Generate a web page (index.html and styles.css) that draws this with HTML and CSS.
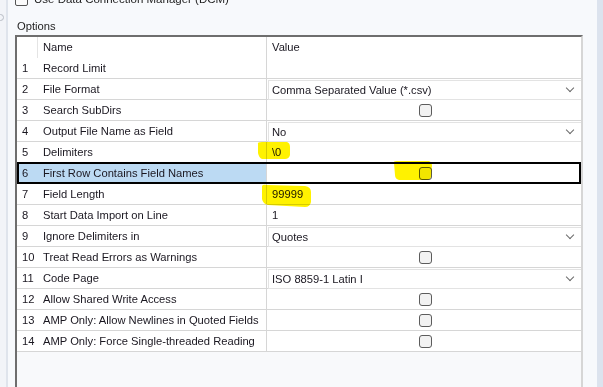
FILE: index.html
```html
<!DOCTYPE html>
<html>
<head>
    <meta charset="UTF-8">
    <title>Options</title>
    <link rel="stylesheet" href="styles.css">
</head>
<body>
    <div class="shell">
        <div class="rail"><span class="knob"></span></div>
        <div class="panel">
            <div class="dcm">
                <span class="tick"></span>
                <span>Use Data Connection Manager (DCM)</span>
            </div>
            <div class="caption">Options</div>

            <div class="grid">
                <div class="row head">
                    <div class="num"></div>
                    <div class="name">Name</div>
                    <div class="val">Value</div>
                </div>
                <div class="row">
                    <div class="num">1</div>
                    <div class="name">Record Limit</div>
                    <div class="val"></div>
                </div>
                <div class="row">
                    <div class="num">2</div>
                    <div class="name">File Format</div>
                    <div class="val"><div class="combo">Comma Separated Value (*.csv)<span class="chev"></span></div></div>
                </div>
                <div class="row">
                    <div class="num">3</div>
                    <div class="name">Search SubDirs</div>
                    <div class="val center"><span class="check"></span></div>
                </div>
                <div class="row">
                    <div class="num">4</div>
                    <div class="name">Output File Name as Field</div>
                    <div class="val"><div class="combo">No<span class="chev"></span></div></div>
                </div>
                <div class="row">
                    <div class="num">5</div>
                    <div class="name">Delimiters</div>
                    <div class="val text">\0</div>
                </div>
                <div class="row selected">
                    <div class="num">6</div>
                    <div class="name">First Row Contains Field Names</div>
                    <div class="val center"><span class="check"></span></div>
                </div>
                <div class="row">
                    <div class="num">7</div>
                    <div class="name">Field Length</div>
                    <div class="val text">99999</div>
                </div>
                <div class="row">
                    <div class="num">8</div>
                    <div class="name">Start Data Import on Line</div>
                    <div class="val text">1</div>
                </div>
                <div class="row">
                    <div class="num">9</div>
                    <div class="name">Ignore Delimiters in</div>
                    <div class="val"><div class="combo">Quotes<span class="chev"></span></div></div>
                </div>
                <div class="row">
                    <div class="num">10</div>
                    <div class="name">Treat Read Errors as Warnings</div>
                    <div class="val center"><span class="check"></span></div>
                </div>
                <div class="row">
                    <div class="num">11</div>
                    <div class="name">Code Page</div>
                    <div class="val"><div class="combo">ISO 8859-1 Latin I<span class="chev"></span></div></div>
                </div>
                <div class="row">
                    <div class="num">12</div>
                    <div class="name">Allow Shared Write Access</div>
                    <div class="val center"><span class="check"></span></div>
                </div>
                <div class="row">
                    <div class="num">13</div>
                    <div class="name">AMP Only: Allow Newlines in Quoted Fields</div>
                    <div class="val center"><span class="check"></span></div>
                </div>
                <div class="row">
                    <div class="num">14</div>
                    <div class="name">AMP Only: Force Single-threaded Reading</div>
                    <div class="val center"><span class="check"></span></div>
                </div>

                <!-- marker strokes drawn over the grid -->
                <svg class="marker" width="568" height="240" viewBox="0 0 568 240">
                    <path d="M241 107 Q240 105 245 105 L270 105 Q273 106 273 110 L273 118 Q272 122 268 122 L245 122 Q242 121 241 116 Z"/>
                    <path d="M377 126 Q376 124 380 124 L412 124 Q415 125 415 129 L414 140 Q413 143 409 143 L382 143 Q378 142 378 138 Z"/>
                    <path d="M245 149 Q246 147 250 148 L288 149 Q294 150 294 155 L294 165 Q293 170 288 170 L251 168 Q246 167 245 162 Z"/>
                </svg>
            </div>
        </div>
        <div class="edge"></div>
    </div>
</body>
</html>
```

FILE: styles.css
```css
html, body {
    margin: 0;
    height: 100%;
    overflow: hidden;
}

body {
    font-family: "Liberation Sans", Arial, sans-serif;
    font-size: 11.2px;
    color: #1a1720;
    background: #f7f9fc;
}

.shell {
    display: flex;
    height: 100%;
}

/* Left strip of the window */
.rail {
    width: 6px;
    background: #f2f4f8;
    border-right: 2px solid #dfe4ec;
    position: relative;
}

.knob {
    position: absolute;
    left: -3px;
    top: 14px;
    width: 5px;
    height: 5px;
    border: 1px solid #b8bcc4;
    border-radius: 50%;
}

.panel {
    flex: 1;
    padding-left: 7px;
    padding-right: 14px;
}

/* Right strip */
.edge {
    width: 6px;
    background: #dce3ee;
}

.dcm {
    display: flex;
    align-items: center;
    gap: 6px;
    height: 12px;
    margin-top: -7px;
    color: #1e1e1e;
    font-size: 11.5px;
}

.tick {
    width: 11px;
    height: 11px;
    border: 1px solid #555;
    border-radius: 2px;
    background: #fbfbfb;
}

.caption {
    margin-top: 13px;
    height: 17px;
    line-height: 17px;
    padding-left: 2px;
    color: #1e1e1e;
}

/* The property grid */
.grid {
    position: relative;
    width: 568px;
    height: 400px;
    border-top: 2px solid #6e6e6e;
    border-left: 2px solid #6e6e6e;
    border-right: 2px solid #d6d6d6;
    background: #f8f9fb;
    box-sizing: border-box;
}

.row {
    display: flex;
    height: 21px;
    box-sizing: border-box;
    background: #fff;
    border-bottom: 1px solid #d6d6d6;
    position: relative;
}

.row.head {
    border-bottom: none;
}

.num {
    width: 21px;
    padding-left: 5px;
    box-sizing: border-box;
    line-height: 20px;
}

.head .num {
    border-right: 1px solid #e4e4e4;
}

.name {
    width: 229px;
    padding-left: 5px;
    box-sizing: border-box;
    line-height: 20px;
    border-right: 1px solid #d6d6d6;
}

.val {
    flex: 1;
    line-height: 20px;
    padding-left: 1px;
}

.head .name,
.head .val {
    line-height: 21px;
}

.head .val {
    padding-left: 5px;
}

.val.text {
    padding-left: 5px;
}

.val.center {
    display: flex;
    justify-content: center;
    align-items: center;
}

.combo {
    position: relative;
    height: 18px;
    margin-top: 1px;
    line-height: 18px;
    padding-left: 3px;
    border: 1px solid #e3e3e3;
    border-right: none;
    background: #fff;
}

.chev {
    position: absolute;
    right: 8px;
    top: 4px;
    width: 5px;
    height: 5px;
    border-right: 1px solid #6a6a6a;
    border-bottom: 1px solid #6a6a6a;
    transform: rotate(45deg);
}

.check {
    width: 11px;
    height: 11px;
    border: 1px solid #5c5c5c;
    border-radius: 3px;
    background: #f2f2f2;
    margin-left: 1px;
}

.selected .num,
.selected .name {
    background: #bcdaf3;
}

.selected::after {
    content: "";
    position: absolute;
    left: 0;
    right: 0;
    top: -1px;
    bottom: -1px;
    border: 2px solid #000;
}

.marker {
    position: absolute;
    left: 0;
    top: 0;
    pointer-events: none;
    mix-blend-mode: multiply;
}

.marker path {
    fill: #fff200;
}
```
